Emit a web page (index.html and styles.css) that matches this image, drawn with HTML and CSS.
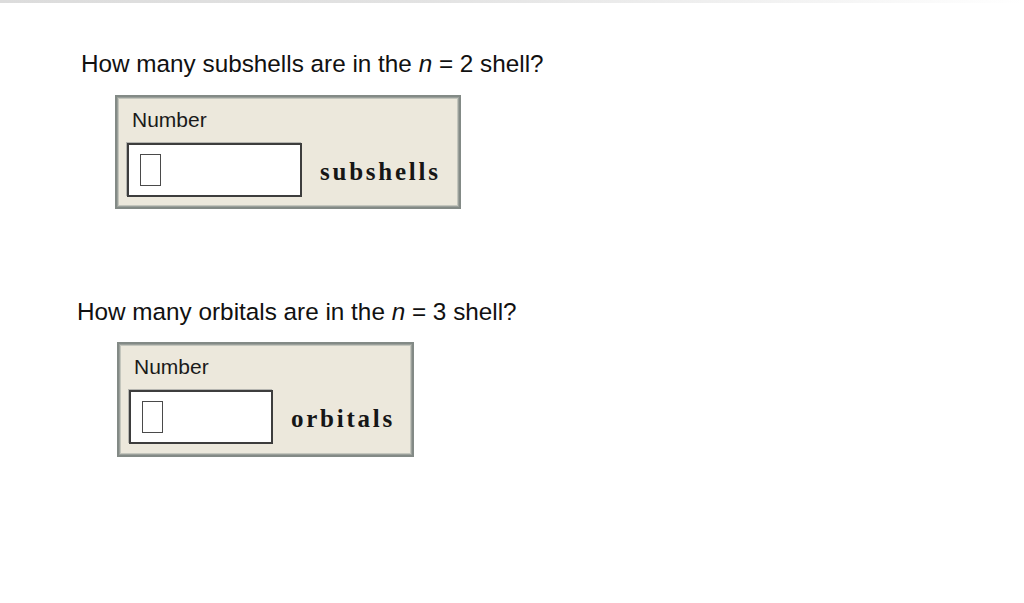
FILE: index.html
```html
<!DOCTYPE html>
<html lang="en">
<head>
<meta charset="utf-8">
<title>Quantum numbers</title>
<link rel="stylesheet" href="styles.css">
</head>
<body>
<div class="topbar"></div>
<main class="sheet">
  <section class="question q-first">
    <p class="prompt">How many subshells are in the <i>n</i> = 2 shell?</p>
    <div class="answer">
      <div class="answer-label">Number</div>
      <div class="answer-row">
        <div class="entry entry-wide"><span class="caret"></span></div>
        <span class="unit">subshells</span>
      </div>
    </div>
  </section>
  <section class="question q-second">
    <p class="prompt">How many orbitals are in the <i>n</i> = 3 shell?</p>
    <div class="answer">
      <div class="answer-label">Number</div>
      <div class="answer-row">
        <div class="entry entry-narrow"><span class="caret"></span></div>
        <span class="unit">orbitals</span>
      </div>
    </div>
  </section>
</main>
</body>
</html>
```

FILE: styles.css
```css
html, body {
  margin: 0;
  padding: 0;
  background: #ffffff;
}

body {
  font-family: "Liberation Sans", Arial, sans-serif;
  color: #111111;
}

.topbar {
  height: 3px;
  background: linear-gradient(to right, #dcdcdc 0%, #e2e2e2 40%, #f4f4f4 80%, #ffffff 100%);
}

.sheet {
  display: flex;
  flex-direction: column;
}

.question {
  display: flex;
  flex-direction: column;
  align-items: flex-start;
}

.q-first {
  padding-top: 47px;
  padding-left: 81px;
}

.q-second {
  padding-top: 89px;
  padding-left: 77px;
}

.prompt {
  margin: 0;
  font-size: 24.3px;
  line-height: 28px;
}

.prompt i {
  font-style: italic;
}

.answer {
  box-sizing: border-box;
  background: #ece8dc;
  border: 2px solid #838a86;
  box-shadow: inset 0 0 0 1px #9ba09b, inset 0 0 0 2px #c4c6bd;
  padding: 11px 16px 10px 10px;
}

.q-first .answer {
  margin-top: 17px;
  margin-left: 34px;
  width: 346px;
}

.q-second .answer {
  margin-top: 16px;
  margin-left: 40px;
  width: 297px;
  padding-bottom: 11px;
}

.answer-label {
  font-size: 21px;
  line-height: 24px;
  padding-left: 5px;
  color: #1a1a1a;
}

.answer-row {
  display: flex;
  align-items: center;
  margin-top: 11px;
  gap: 18px;
}

.entry {
  flex: none;
  box-sizing: border-box;
  height: 54px;
  background: #ffffff;
  border: 2px solid #3d3d3d;
  box-shadow: -1px -1px 0 #b5b5b0;
  display: flex;
  align-items: center;
  padding-left: 11px;
}

.entry-wide {
  width: 175px;
}

.entry-narrow {
  width: 144px;
}

.caret {
  display: block;
  box-sizing: border-box;
  width: 21px;
  height: 32px;
  border: 1.5px solid #4a4a4a;
  background: #ffffff;
}

.unit {
  font-family: "Liberation Serif", "Times New Roman", serif;
  font-weight: bold;
  font-size: 25px;
  letter-spacing: 2.75px;
  padding-top: 3px;
  white-space: nowrap;
  color: #161616;
}
```
